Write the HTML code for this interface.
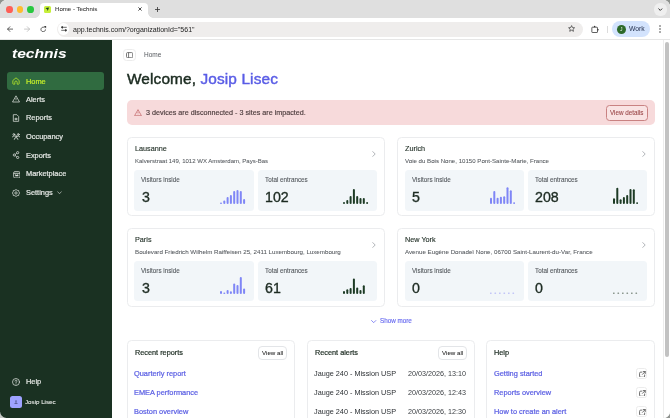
<!DOCTYPE html>
<html><head><meta charset="utf-8">
<style>
*{margin:0;padding:0;box-sizing:border-box}
html,body{width:670px;height:418px;overflow:hidden;background:#8f938f;font-family:"Liberation Sans",sans-serif}
.abs{position:absolute}
.t,.nav,.ctitle,.caddr,.lbl,.val,.link{will-change:transform}
#win{position:absolute;left:0;top:0;width:670px;height:418px;background:#dfdfdf;overflow:hidden;border-radius:6.5px}
.dot{position:absolute;top:6.1px;width:6.7px;height:6.7px;border-radius:50%}
#tab{position:absolute;left:39.5px;top:2.7px;width:108.5px;height:16px;background:#fff;border-radius:4px 4px 0 0}
#toolbar{position:absolute;left:0;top:18px;width:670px;height:22px;background:#fff;border-bottom:1px solid #e6e6e6}
#addr{position:absolute;left:56.5px;top:21.6px;width:526.5px;height:15px;background:#efedec;border-radius:7.5px}
.t{position:absolute;white-space:nowrap;line-height:1}
#side{position:absolute;left:0;top:40px;width:111.5px;height:378px;background:#1a3122}
.nav{position:absolute;left:25.5px;color:#e6e9e6;font-size:7.4px;-webkit-text-stroke:0.2px currentColor;line-height:1;white-space:nowrap}
.ico{position:absolute;left:12px}
#main{position:absolute;left:111.5px;top:40px;width:558.5px;height:378px;background:#fff}
.card{position:absolute;border:1px solid #ebecee;border-radius:4.5px;background:#fff}
.box{position:absolute;background:#f2f6f9;border-radius:3.5px;width:119.4px;height:40.6px}
.lbl{position:absolute;left:7px;top:7px;font-size:6.3px;color:#55595e;-webkit-text-stroke:0.1px currentColor;line-height:1;white-space:nowrap}
.val{position:absolute;left:7.2px;top:19.9px;font-size:14.2px;color:#1d2b22;-webkit-text-stroke:0.35px #1d2b22;line-height:1;white-space:nowrap}
.ctitle{position:absolute;left:7px;top:6.6px;font-size:7.25px;color:#1d2b22;-webkit-text-stroke:0.12px currentColor;line-height:1;white-space:nowrap}
.caddr{position:absolute;left:7px;top:20.1px;font-size:6.2px;color:#54585d;-webkit-text-stroke:0.06px currentColor;line-height:1;white-space:nowrap}
.chev{position:absolute;left:244px;top:12.8px}
.link{position:absolute;font-size:7.4px;color:#5b5fe3;-webkit-text-stroke:0.22px currentColor;line-height:1;white-space:nowrap}
.btn{position:absolute;border:1px solid #e3e5e8;border-radius:4px;background:#fff}
.chart{position:absolute;left:85.4px;top:15.6px;width:28px;height:18px}
</style></head><body>
<div class="abs" style="left:0;top:400px;width:20px;height:18px;background:#c5c9c5"></div>
<div id="win">
  <div class="abs" style="left:0;top:0;width:670px;height:418px;border-radius:6.5px;background:#dfdfdf;box-shadow:0 0 0 0.6px #f2f2f2"></div>
  <div class="dot" style="left:6.1px;background:#fe5f57"></div>
  <div class="dot" style="left:16.7px;background:#febc2e"></div>
  <div class="dot" style="left:27.2px;background:#28c840"></div>
  <div id="tab"></div>
  <div class="abs" style="left:35px;top:13px;width:5px;height:5px;background:radial-gradient(circle at 0 0,#dfdfdf 4.5px,#fff 5px)"></div>
  <div class="abs" style="left:148px;top:13px;width:5px;height:5px;background:radial-gradient(circle at 100% 0,#dfdfdf 4.5px,#fff 5px)"></div>
  <div class="abs" style="left:43.9px;top:5.6px;width:7px;height:7px;background:#c6ef3a;border-radius:1.5px"></div>
  <svg class="abs" style="left:45.3px;top:7px" width="4.5" height="4.5" viewBox="0 0 10 10" fill="#1c3a22"><path d="M1 2 L9 1 L6 9 L5 5.5 Z"/></svg>
  <div class="t" style="left:55px;top:5.9px;font-size:6.1px;color:#3c3c3c;-webkit-text-stroke:0.08px #3c3c3c">Home - Technis</div>
  <svg class="abs" style="left:138.4px;top:7.4px" width="4" height="4" viewBox="0 0 10 10" stroke="#222" stroke-width="2"><path d="M1 1 L9 9 M9 1 L1 9"/></svg>
  <svg class="abs" style="left:154.8px;top:6.8px" width="5" height="5" viewBox="0 0 10 10" stroke="#333" stroke-width="1.6"><path d="M5 0 V10 M0 5 H10"/></svg>
  <div class="abs" style="left:654px;top:2.9px;width:13.3px;height:13px;background:#efefef;border-radius:6px"></div>
  <svg class="abs" style="left:658.4px;top:7.8px" width="4.6" height="3" viewBox="0 0 10 6" fill="none" stroke="#222" stroke-width="2"><path d="M1 1 L5 5 L9 1"/></svg>
  <div id="toolbar"></div>
  <svg class="abs" style="left:7.2px;top:26.2px" width="6.2" height="6.2" viewBox="0 0 12 12" fill="none" stroke="#3a3a3a" stroke-width="1.5" stroke-linecap="round" stroke-linejoin="round"><path d="M11 6 H1.2 M5.6 1.4 L1.2 6 L5.6 10.6"/></svg>
  <svg class="abs" style="left:23.8px;top:26.2px" width="6.2" height="6.2" viewBox="0 0 12 12" fill="none" stroke="#b4b4b4" stroke-width="1.4" stroke-linecap="round" stroke-linejoin="round"><path d="M1 6 H10.8 M6.4 1.4 L10.8 6 L6.4 10.6"/></svg>
  <svg class="abs" style="left:40.4px;top:25.9px" width="6.6" height="6.6" viewBox="0 0 12 12" fill="none" stroke="#3a3a3a" stroke-width="1.5"><path d="M9.95 6.2 A4.1 4.1 0 1 1 8.3 3"/><path d="M7 0.2 L11.2 0.2 L11.2 4.4 Z" fill="#3a3a3a" stroke="none"/></svg>
  <div id="addr"></div>
  <div class="abs" style="left:58px;top:22.8px;width:11px;height:12.6px;background:#fff;border-radius:50%"></div>
  <svg class="abs" style="left:60.8px;top:26.4px" width="6" height="5.6" viewBox="0 0 12 11" fill="#3a3a3a" stroke="#3a3a3a" stroke-width="1.5"><path d="M5 2.5 H11.5 M0.5 8.5 H7" fill="none"/><circle cx="2.6" cy="2.5" r="1.7"/><circle cx="9.4" cy="8.5" r="1.7"/></svg>
  <div class="t" style="left:73px;top:25.5px;font-size:7px;color:#222">app.technis.com/?organizationId="561"</div>
  <svg class="abs" style="left:567.9px;top:25.2px" width="7.2" height="7" viewBox="0 0 24 24" fill="none" stroke="#333" stroke-width="2.4" stroke-linejoin="round"><path d="M12 2 L15 8.8 L22.3 9.5 L16.8 14.4 L18.4 21.6 L12 17.9 L5.6 21.6 L7.2 14.4 L1.7 9.5 L9 8.8 Z"/></svg>
  <svg class="abs" style="left:591.4px;top:24.8px" width="8.2" height="8.2" viewBox="0 0 24 24" fill="none" stroke="#333" stroke-width="2.3" stroke-linejoin="round"><rect x="2.5" y="6.5" width="16.5" height="15.5" rx="1.5"/><circle cx="10.7" cy="4.5" r="2.2" fill="#333" stroke="none"/><circle cx="20.5" cy="14.2" r="2.2" fill="#333" stroke="none"/></svg>
  <div class="abs" style="left:607px;top:26px;width:0.7px;height:7px;background:#dcdcdc"></div>
  <div class="abs" style="left:612.2px;top:21.4px;width:37.5px;height:15.6px;background:#d3e3fd;border-radius:8px"></div>
  <div class="abs" style="left:617px;top:24.7px;width:9px;height:9px;background:#2d6a2a;border-radius:50%"></div>
  <div class="t" style="left:619.8px;top:26.5px;font-size:5px;color:#e8f0e8">J</div>
  <div class="t" style="left:629px;top:26px;font-size:6.8px;color:#1f2b4a">Work</div>
  <svg class="abs" style="left:658.8px;top:25px" width="2" height="8" viewBox="0 0 2 8" fill="#444"><circle cx="1" cy="1" r="0.8"/><circle cx="1" cy="4" r="0.8"/><circle cx="1" cy="7" r="0.8"/></svg>

  <div id="side">
    <div class="t" style="left:12.4px;top:8.40px;font-size:12.2px;font-weight:bold;font-style:italic;color:#fff;letter-spacing:0px;transform:scaleX(1.28);transform-origin:0 0">technis</div>
    <div class="abs" style="left:7.4px;top:32.10px;width:96.6px;height:17.9px;background:#306b40;border-radius:3px"></div>
    <svg class="ico" style="top:37.40px" width="8" height="8" viewBox="0 0 24 24" fill="none" stroke="#b8e82a" stroke-width="2.4" stroke-linejoin="round"><path d="M2.5 10.5 L12 2.5 L21.5 10.5 V20 a1.5 1.5 0 0 1 -1.5 1.5 H15.5 V15.5 a3.5 3.5 0 0 0 -7 0 V21.5 H4 a1.5 1.5 0 0 1 -1.5 -1.5 Z"/></svg>
    <div class="nav" style="top:37.80px;color:#c4ee2a">Home</div>
    <svg class="ico" style="top:55.3px;left:12.2px" width="8" height="8" viewBox="0 0 24 24" fill="none" stroke="#dfe3df" stroke-width="2.2" stroke-linejoin="round"><path d="M12 2.5 L22.5 21 H1.5 Z"/><path d="M12 9 V14.5 M12 17 V18"/></svg>
    <div class="nav" style="top:55.80px">Alerts</div>
    <svg class="ico" style="top:74.40px" width="8" height="8" viewBox="0 0 24 24" fill="none" stroke="#dfe3df" stroke-width="2.2" stroke-linejoin="round"><path d="M4 2 H14.5 L20 7.5 V22 H4 Z"/><path d="M9 13 H15 V17 H9 Z"/></svg>
    <div class="nav" style="top:74.40px">Reports</div>
    <svg class="ico" style="top:93.30px" width="8.2" height="7" viewBox="0 0 24 20" fill="none" stroke="#dfe3df" stroke-width="2.3" stroke-linecap="round"><circle cx="5.5" cy="4" r="2.6"/><circle cx="18.5" cy="4" r="2.6"/><circle cx="12" cy="10" r="2.6"/><path d="M1.2 11.5 a4.5 4.5 0 0 1 5.5 -3.5 M22.8 11.5 a4.5 4.5 0 0 0 -5.5 -3.5 M6.5 18.5 a5.5 5 0 0 1 11 0"/></svg>
    <div class="nav" style="top:93.00px">Occupancy</div>
    <svg class="ico" style="top:111.40px;left:12.3px" width="8" height="8" viewBox="0 0 24 24" fill="none" stroke="#dfe3df" stroke-width="2.3"><circle cx="17" cy="5" r="3.3"/><circle cx="7" cy="12" r="3.3"/><circle cx="17" cy="19.5" r="3.3"/><path d="M9.8 10.2 L14.2 7 M9.8 13.8 L14.2 17.2"/></svg>
    <div class="nav" style="top:111.60px">Exports</div>
    <svg class="ico" style="top:130.7px;left:12.6px" width="7.6" height="7.6" viewBox="0 0 24 24" fill="none" stroke="#dfe3df" stroke-width="2.4" stroke-linejoin="round"><rect x="2" y="2" width="20" height="20" rx="4"/><path d="M2 7.5 H22"/><path d="M7 14.5 H17" stroke-width="3.5"/><circle cx="9" cy="11" r="0.6"/><circle cx="15" cy="11" r="0.6"/></svg>
    <div class="nav" style="top:130.20px">Marketplace</div>
    <svg class="ico" style="top:148.60px" width="8" height="8" viewBox="0 0 24 24" fill="none" stroke="#dfe3df" stroke-width="2.2" stroke-linejoin="round"><path d="M12 1.5 L15.5 4 L20 4.5 L20.5 8.5 L23 12 L20.5 15.5 L20 19.5 L15.5 20 L12 22.5 L8.5 20 L4 19.5 L3.5 15.5 L1 12 L3.5 8.5 L4 4.5 L8.5 4 Z"/><circle cx="12" cy="12" r="3.5"/></svg>
    <div class="nav" style="top:148.80px">Settings</div>
    <svg class="abs" style="left:57px;top:151.00px" width="5" height="3.5" viewBox="0 0 10 7" fill="none" stroke="#cfd3cf" stroke-width="1.3"><path d="M1 1 L5 5.5 L9 1"/></svg>
    <svg class="ico" style="top:337.60px" width="8" height="8" viewBox="0 0 24 24" fill="none" stroke="#dfe3df" stroke-width="2.2" stroke-linecap="round"><circle cx="12" cy="12" r="10.5"/><path d="M9 9.5 a3 3 0 1 1 4 2.8 c-0.8 0.3 -1 0.9 -1 1.7 M12 17.5 V18"/></svg>
    <div class="nav" style="top:337.80px">Help</div>
    <div class="abs" style="left:10.4px;top:356.4px;width:11.6px;height:11.6px;background:#9ea2ff;border-radius:2.5px"></div>
    <svg class="abs" style="left:13.2px;top:359.2px" width="6" height="6" viewBox="0 0 24 24" fill="#5b5f9c"><circle cx="12" cy="8" r="3.5"/><path d="M4 20 L12 11.5 L20 20 Z"/></svg>
    <div class="nav" style="left:25px;top:358.6px;font-size:6.2px;-webkit-text-stroke:0.1px currentColor">Josip Lisec</div>
  </div>

  <div id="main"></div>

  <!-- breadcrumb -->
  <div class="btn" style="left:123px;top:48.6px;width:12.5px;height:12.5px;border-color:#ececec;border-radius:3.5px"></div>
  <svg class="abs" style="left:125.8px;top:51.8px" width="7.2" height="6.3" viewBox="0 0 14 12" fill="none" stroke="#555" stroke-width="1.5"><rect x="1" y="1" width="12" height="10" rx="2"/><path d="M5 1 V11"/></svg>
  <div class="t" style="left:143.5px;top:51.5px;font-size:6.5px;color:#55595e">Home</div>
  <div class="t" style="left:126.8px;top:71px;font-size:15.4px;color:#1b2b20;-webkit-text-stroke:0.45px #1b2b20;letter-spacing:0.12px">Welcome, <span style="color:#5a5de6;-webkit-text-stroke:0.45px #5a5de6">Josip Lisec</span></div>

  <!-- banner -->
  <div class="abs" style="left:126.5px;top:99.8px;width:528.5px;height:25.7px;background:#f7dadb;border-radius:5px"></div>
  <svg class="abs" style="left:134px;top:108.8px" width="8" height="7.2" viewBox="0 0 24 22" fill="none" stroke="#c46a6b" stroke-width="2.3" stroke-linejoin="round"><path d="M12 2 L22.5 20.5 H1.5 Z"/><path d="M12 8.5 V13.5 M12 16.2 V17"/></svg>
  <div class="t" style="left:146px;top:109px;font-size:7.2px;color:#4a3a3b;-webkit-text-stroke:0.15px #4a3a3b">3 devices are disconnected - 3 sites are impacted.</div>
  <div class="abs" style="left:606px;top:105.2px;width:41.8px;height:15.4px;border:1px solid #c98282;border-radius:3.5px;background:#f9e3e3"></div>
  <div class="t" style="left:610.4px;top:109.6px;font-size:6.3px;color:#9a4648;-webkit-text-stroke:0.08px #9a4648">View details</div>

  <!-- cards -->
  <div class="card" style="left:126.6px;top:137.4px;width:258.3px;height:79.1px">
    <div class="ctitle">Lausanne</div><svg class="chev" width="4" height="6" viewBox="0 0 4 6" fill="none" stroke="#a8acb0" stroke-width="0.9" stroke-linecap="round" stroke-linejoin="round"><path d="M0.8 0.6 L3.2 3 L0.8 5.4"/></svg>
    <div class="caddr" style="font-size:6.02px">Kalverstraat 149, 1012 WX Amsterdam, Pays-Bas</div>
    <div class="box" style="left:6.9px;top:31.8px"><div class="lbl">Visitors inside</div><div class="val">3</div><svg class="chart" width="28" height="18" viewBox="0 0 28 18" fill="#7f86f6"><rect x="0.00" y="16.40" width="2.0" height="1.60" rx="1"/><rect x="3.30" y="14.40" width="2.0" height="3.60" rx="1"/><rect x="6.60" y="11.00" width="2.0" height="7.00" rx="1"/><rect x="9.90" y="9.00" width="2.0" height="9.00" rx="1"/><rect x="13.20" y="5.00" width="2.0" height="13.00" rx="1"/><rect x="16.50" y="4.00" width="2.0" height="14.00" rx="1"/><rect x="19.80" y="5.00" width="2.0" height="13.00" rx="1"/><rect x="23.10" y="13.00" width="2.0" height="5.00" rx="1"/></svg></div>
    <div class="box" style="left:130.1px;top:31.8px"><div class="lbl">Total entrances</div><div class="val">102</div><svg class="chart" width="28" height="18" viewBox="0 0 28 18" fill="#1d3b25"><rect x="0.00" y="16.00" width="2.0" height="2.00" rx="1"/><rect x="3.30" y="14.00" width="2.0" height="4.00" rx="1"/><rect x="6.60" y="10.00" width="2.0" height="8.00" rx="1"/><rect x="9.90" y="3.00" width="2.0" height="15.00" rx="1"/><rect x="13.20" y="10.00" width="2.0" height="8.00" rx="1"/><rect x="16.50" y="12.00" width="2.0" height="6.00" rx="1"/><rect x="19.80" y="12.00" width="2.0" height="6.00" rx="1"/><rect x="23.10" y="16.00" width="2.0" height="2.00" rx="1"/></svg></div>
  </div>
  <div class="card" style="left:396.7px;top:137.4px;width:258.3px;height:79.1px">
    <div class="ctitle">Zurich</div><svg class="chev" width="4" height="6" viewBox="0 0 4 6" fill="none" stroke="#a8acb0" stroke-width="0.9" stroke-linecap="round" stroke-linejoin="round"><path d="M0.8 0.6 L3.2 3 L0.8 5.4"/></svg>
    <div class="caddr" style="font-size:6.12px">Voie du Bois None, 10150 Pont-Sainte-Marie, France</div>
    <div class="box" style="left:6.9px;top:31.8px"><div class="lbl">Visitors inside</div><div class="val">5</div><svg class="chart" width="28" height="18" viewBox="0 0 28 18" fill="#7f86f6"><rect x="0.00" y="11.70" width="2.0" height="6.30" rx="1"/><rect x="3.30" y="5.10" width="2.0" height="12.90" rx="1"/><rect x="6.60" y="11.70" width="2.0" height="6.30" rx="1"/><rect x="9.90" y="10.80" width="2.0" height="7.20" rx="1"/><rect x="13.20" y="10.20" width="2.0" height="7.80" rx="1"/><rect x="16.50" y="1.20" width="2.0" height="16.80" rx="1"/><rect x="19.80" y="4.20" width="2.0" height="13.80" rx="1"/><rect x="23.10" y="16.20" width="2.0" height="1.80" rx="1"/></svg></div>
    <div class="box" style="left:130.1px;top:31.8px"><div class="lbl">Total entrances</div><div class="val">208</div><svg class="chart" width="28" height="18" viewBox="0 0 28 18" fill="#1d3b25"><rect x="0.00" y="12.30" width="2.0" height="5.70" rx="1"/><rect x="3.30" y="1.80" width="2.0" height="16.20" rx="1"/><rect x="6.60" y="13.20" width="2.0" height="4.80" rx="1"/><rect x="9.90" y="11.10" width="2.0" height="6.90" rx="1"/><rect x="13.20" y="9.00" width="2.0" height="9.00" rx="1"/><rect x="16.50" y="3.00" width="2.0" height="15.00" rx="1"/><rect x="19.80" y="3.30" width="2.0" height="14.70" rx="1"/><rect x="23.10" y="16.20" width="2.0" height="1.80" rx="1"/></svg></div>
  </div>
  <div class="card" style="left:126.6px;top:228.1px;width:258.3px;height:79.1px">
    <div class="ctitle">Paris</div><svg class="chev" width="4" height="6" viewBox="0 0 4 6" fill="none" stroke="#a8acb0" stroke-width="0.9" stroke-linecap="round" stroke-linejoin="round"><path d="M0.8 0.6 L3.2 3 L0.8 5.4"/></svg>
    <div class="caddr">Boulevard Friedrich Wilhelm Raiffeisen 25, 2411 Luxembourg, Luxembourg</div>
    <div class="box" style="left:6.9px;top:31.8px"><div class="lbl">Visitors inside</div><div class="val">3</div><svg class="chart" width="28" height="18" viewBox="0 0 28 18" fill="#7f86f6"><rect x="0.00" y="15.00" width="2.0" height="3.00" rx="1"/><rect x="3.30" y="16.40" width="2.0" height="1.60" rx="1"/><rect x="6.60" y="14.10" width="2.0" height="3.90" rx="1"/><rect x="9.90" y="15.30" width="2.0" height="2.70" rx="1"/><rect x="13.20" y="7.50" width="2.0" height="10.50" rx="1"/><rect x="16.50" y="9.00" width="2.0" height="9.00" rx="1"/><rect x="19.80" y="1.00" width="2.0" height="17.00" rx="1"/><rect x="23.10" y="12.60" width="2.0" height="5.40" rx="1"/></svg></div>
    <div class="box" style="left:130.1px;top:31.8px"><div class="lbl">Total entrances</div><div class="val">61</div><svg class="chart" width="28" height="18" viewBox="0 0 28 18" fill="#1d3b25"><rect x="0.00" y="15.00" width="2.0" height="3.00" rx="1"/><rect x="3.30" y="13.20" width="2.0" height="4.80" rx="1"/><rect x="6.60" y="12.00" width="2.0" height="6.00" rx="1"/><rect x="9.90" y="2.40" width="2.0" height="15.60" rx="1"/><rect x="13.20" y="11.40" width="2.0" height="6.60" rx="1"/><rect x="16.50" y="14.10" width="2.0" height="3.90" rx="1"/><rect x="19.80" y="9.30" width="2.0" height="8.70" rx="1"/></svg></div>
  </div>
  <div class="card" style="left:396.7px;top:228.1px;width:258.3px;height:79.1px">
    <div class="ctitle">New York</div><svg class="chev" width="4" height="6" viewBox="0 0 4 6" fill="none" stroke="#a8acb0" stroke-width="0.9" stroke-linecap="round" stroke-linejoin="round"><path d="M0.8 0.6 L3.2 3 L0.8 5.4"/></svg>
    <div class="caddr">Avenue Eugène Donadeï None, 06700 Saint-Laurent-du-Var, France</div>
    <div class="box" style="left:6.9px;top:31.8px"><div class="lbl">Visitors inside</div><div class="val">0</div><svg class="chart" width="28" height="18" viewBox="0 0 28 18" fill="#c3c6f7"><rect x="0.00" y="16.4" width="1.6" height="1.6" rx="0.3"/><rect x="4.50" y="16.4" width="1.6" height="1.6" rx="0.3"/><rect x="9.00" y="16.4" width="1.6" height="1.6" rx="0.3"/><rect x="13.50" y="16.4" width="1.6" height="1.6" rx="0.3"/><rect x="18.00" y="16.4" width="1.6" height="1.6" rx="0.3"/><rect x="22.50" y="16.4" width="1.6" height="1.6" rx="0.3"/></svg></div>
    <div class="box" style="left:130.1px;top:31.8px"><div class="lbl">Total entrances</div><div class="val">0</div><svg class="chart" width="28" height="18" viewBox="0 0 28 18" fill="#8d9990"><rect x="0.00" y="16.4" width="1.6" height="1.6" rx="0.3"/><rect x="4.50" y="16.4" width="1.6" height="1.6" rx="0.3"/><rect x="9.00" y="16.4" width="1.6" height="1.6" rx="0.3"/><rect x="13.50" y="16.4" width="1.6" height="1.6" rx="0.3"/><rect x="18.00" y="16.4" width="1.6" height="1.6" rx="0.3"/><rect x="22.50" y="16.4" width="1.6" height="1.6" rx="0.3"/></svg></div>
  </div>

  <svg class="abs" style="left:371.2px;top:319.5px" width="5.4" height="3.2" viewBox="0 0 10 6" fill="none" stroke="#6a6df0" stroke-width="1.5" stroke-linecap="round"><path d="M1 1 L5 5 L9 1"/></svg>
  <div class="t" style="left:380px;top:317.6px;font-size:6.3px;color:#6a6df0;-webkit-text-stroke:0.15px #6a6df0">Show more</div>

  <!-- bottom cards -->
  <div class="card" style="left:126.5px;top:339.8px;width:168.7px;height:90px">
    <div class="ctitle" style="top:8.2px;font-size:7.3px;color:#1b2a20;-webkit-text-stroke:0.2px #1b2a20">Recent reports</div>
    <div class="btn" style="left:130.2px;top:4.9px;width:29.3px;height:14.5px"></div>
    <div class="t" style="left:134.6px;top:9.3px;font-size:6.2px;color:#222;-webkit-text-stroke:0.05px #222">View all</div>
    <div class="link" style="left:6.5px;top:29px">Quarterly report</div>
    <div class="link" style="left:6.5px;top:48px">EMEA performance</div>
    <div class="link" style="left:6.5px;top:67px">Boston overview</div>
  </div>
  <div class="card" style="left:306.7px;top:339.8px;width:168px;height:90px">
    <div class="ctitle" style="top:8.2px;font-size:7.3px;color:#1b2a20;-webkit-text-stroke:0.2px #1b2a20">Recent alerts</div>
    <div class="btn" style="left:130.7px;top:5.2px;width:28.8px;height:14px"></div>
    <div class="t" style="left:134.6px;top:9.3px;font-size:6.2px;color:#222;-webkit-text-stroke:0.05px #222">View all</div>
    <div class="t" style="left:6.5px;top:29px;font-size:7.28px;color:#2b2f33">Jauge 240 - Mission USP</div>
    <div class="t" style="left:6.5px;top:48px;font-size:7.28px;color:#2b2f33">Jauge 240 - Mission USP</div>
    <div class="t" style="left:6.5px;top:67px;font-size:7.28px;color:#2b2f33">Jauge 240 - Mission USP</div>
    <div class="t" style="right:7.5px;top:29px;font-size:7.2px;color:#3a3e42">20/03/2026, 13:10</div>
    <div class="t" style="right:7.5px;top:48px;font-size:7.2px;color:#3a3e42">20/03/2026, 12:43</div>
    <div class="t" style="right:7.5px;top:67px;font-size:7.2px;color:#3a3e42">20/03/2026, 12:30</div>
  </div>
  <div class="card" style="left:486.3px;top:339.8px;width:168.6px;height:90px">
    <div class="ctitle" style="top:8.2px;font-size:7.3px;color:#1b2a20;-webkit-text-stroke:0.2px #1b2a20">Help</div>
    <div class="link" style="left:6.5px;top:29px">Getting started</div>
    <div class="link" style="left:6.5px;top:48px">Reports overview</div>
    <div class="link" style="left:6.5px;top:67px">How to create an alert</div>
    <div class="btn" style="left:149.2px;top:27.3px;width:10.5px;height:10.6px;border-color:#ececec;border-radius:2.5px"></div><svg class="abs" style="left:151.6px;top:29.8px" width="6.8" height="6.8" viewBox="0 0 12 12" fill="none" stroke="#555" stroke-width="1.5" stroke-linecap="round"><path d="M5 2 H3 a2 2 0 0 0 -2 2 V9 a2 2 0 0 0 2 2 H8 a2 2 0 0 0 2 -2 V7"/><path d="M6 6 L11 1 M7.5 1 H11 V4.5"/></svg><div class="btn" style="left:149.2px;top:46.3px;width:10.5px;height:10.6px;border-color:#ececec;border-radius:2.5px"></div><svg class="abs" style="left:151.6px;top:48.8px" width="6.8" height="6.8" viewBox="0 0 12 12" fill="none" stroke="#555" stroke-width="1.5" stroke-linecap="round"><path d="M5 2 H3 a2 2 0 0 0 -2 2 V9 a2 2 0 0 0 2 2 H8 a2 2 0 0 0 2 -2 V7"/><path d="M6 6 L11 1 M7.5 1 H11 V4.5"/></svg><div class="btn" style="left:149.2px;top:65.3px;width:10.5px;height:10.6px;border-color:#ececec;border-radius:2.5px"></div><svg class="abs" style="left:151.6px;top:67.8px" width="6.8" height="6.8" viewBox="0 0 12 12" fill="none" stroke="#555" stroke-width="1.5" stroke-linecap="round"><path d="M5 2 H3 a2 2 0 0 0 -2 2 V9 a2 2 0 0 0 2 2 H8 a2 2 0 0 0 2 -2 V7"/><path d="M6 6 L11 1 M7.5 1 H11 V4.5"/></svg>
  </div>

  <!-- scrollbar -->
  <div class="abs" style="left:663px;top:40px;width:1px;height:378px;background:#ececec"></div>
  <div class="abs" style="left:664.5px;top:42px;width:4px;height:315px;background:#c2c2c2;border-radius:2px"></div>
</div>
</body></html>
